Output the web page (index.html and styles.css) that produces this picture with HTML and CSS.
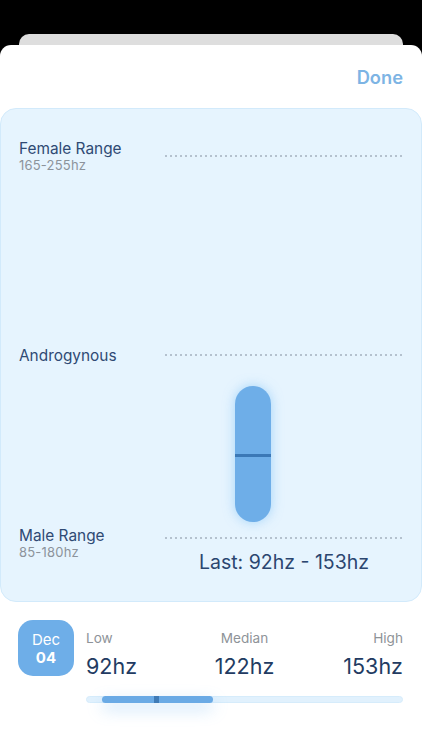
FILE: index.html
```html
<!DOCTYPE html>
<html lang="en">
<head>
    <meta charset="UTF-8">
    <meta name="viewport" content="width=device-width, initial-scale=1.0">
    <link rel="stylesheet" href="styles.css">
    <title>Voice Range</title>
</head>
<body>
    <div class="back-card"></div>
    <div class="sheet">
        <div class="header">
            <button class="done">Done</button>
        </div>

        <div class="chart">
            <div class="row female">
                <div class="label">
                    <div class="title">Female Range</div>
                    <div class="sub">165-255hz</div>
                </div>
                <div class="right"><div class="dots"></div></div>
            </div>

            <div class="row andro">
                <div class="label">
                    <div class="title">Androgynous</div>
                </div>
                <div class="right"><div class="dots"></div></div>
            </div>

            <div class="row male">
                <div class="label">
                    <div class="title">Male Range</div>
                    <div class="sub">85-180hz</div>
                </div>
                <div class="right">
                    <div class="dots"></div>
                    <div class="last">Last: 92hz - 153hz</div>
                </div>
            </div>

            <!-- plot spans 255hz (top line) to 85hz (bottom line) -->
            <div class="plot">
                <div class="pill" style="top: 60.3%; height: 35.6%;">
                    <div class="median" style="top: 50.8%;"></div>
                </div>
            </div>
        </div>

        <div class="summary">
            <div class="date">
                <span class="month">Dec</span>
                <span class="day">04</span>
            </div>
            <div class="stats">
                <div class="stat low">
                    <div class="stat-label">Low</div>
                    <div class="stat-value">92hz</div>
                </div>
                <div class="stat mid">
                    <div class="stat-label">Median</div>
                    <div class="stat-value">122hz</div>
                </div>
                <div class="stat high">
                    <div class="stat-label">High</div>
                    <div class="stat-value">153hz</div>
                </div>
                <div class="track">
                    <div class="fill" style="left: 4.7%; width: 35.4%;">
                        <div class="marker" style="left: 49%;"></div>
                    </div>
                </div>
            </div>
        </div>
    </div>
</body>
</html>
```

FILE: styles.css
```css
* {
    box-sizing: border-box;
}

body {
    margin: 0;
    height: 750px;
    overflow: hidden;
    background-color: #000;
    font-family: Inter, "Noto Sans", sans-serif;
}

.back-card {
    margin: 34px 19px 0;
    height: 11px;
    background-color: #dedede;
    border-radius: 10px 10px 0 0;
}

.sheet {
    height: 705px;
    background-color: #fff;
    border-radius: 11px 11px 0 0;
}

.header {
    height: 63px;
    padding: 21px 19px 0;
    text-align: right;
}

.done {
    border: none;
    background: none;
    padding: 0;
    font-family: inherit;
    font-size: 18.3px;
    line-height: 22px;
    font-weight: 600;
    color: #7db4e4;
    cursor: pointer;
}

.chart {
    position: relative;
    height: 494px;
    padding: 31px 18px 0 0;
    background-color: #e6f4fe;
    border: 1px solid #d2eafb;
    border-radius: 16px;
}

.row {
    display: flex;
    align-items: flex-start;
}

.label {
    width: 164px;
    padding-left: 18px;
    flex-shrink: 0;
}

.title {
    font-size: 15.4px;
    line-height: 18px;
    color: #2f4a74;
}

.sub {
    font-size: 13px;
    line-height: 15px;
    letter-spacing: 0.2px;
    color: #8c939b;
}

.right {
    flex: 1;
}

.dots {
    height: 2px;
    background-image: linear-gradient(to right, #b4c1ce 2px, transparent 2px);
    background-size: 5px 2px;
    background-repeat: repeat-x;
}

.female .dots {
    margin-top: 15px;
}

.andro {
    margin-top: 174px;
}

.andro .dots {
    margin-top: 7px;
}

.male {
    margin-top: 162px;
}

.male .dots {
    margin-top: 10px;
}

.last {
    margin-top: 12px;
    text-align: center;
    font-size: 19.5px;
    line-height: 22px;
    color: #2b4670;
}

.plot {
    position: absolute;
    left: 164px;
    right: 18px;
    top: 47px;
    height: 382px;
}

.pill {
    position: absolute;
    left: 70px;
    width: 36px;
    background-color: #6eaee8;
    border-radius: 18px;
    box-shadow: 0 0 12px rgba(110, 185, 245, 0.55);
}

.median {
    position: absolute;
    left: 0;
    right: 0;
    height: 3px;
    margin-top: -1px;
    background-color: #3b78b6;
}

.summary {
    display: flex;
    align-items: flex-start;
    gap: 12px;
    padding: 18px 19px 0 18px;
}

.date {
    width: 56px;
    height: 56px;
    flex-shrink: 0;
    display: flex;
    flex-direction: column;
    align-items: center;
    justify-content: center;
    padding-top: 2px;
    background-color: #6eaee8;
    border-radius: 15px;
    color: #fff;
    font-size: 15px;
    line-height: 18.2px;
}

.day {
    font-weight: 700;
}

.stats {
    flex: 1;
    display: grid;
    grid-template-columns: 1fr 1fr 1fr;
    padding-top: 10px;
}

.mid {
    text-align: center;
}

.high {
    text-align: right;
}

.stat-label {
    font-size: 13.6px;
    line-height: 17px;
    color: #8e9398;
}

.stat-value {
    margin-top: 6px;
    font-size: 21.5px;
    line-height: 26px;
    color: #223b62;
}

.track {
    grid-column: span 3;
    position: relative;
    height: 7px;
    margin-top: 17px;
    background-color: #e1f1fd;
    border: 1px solid #d6ecfb;
    border-radius: 4px;
}

.fill {
    position: absolute;
    top: -1px;
    bottom: -1px;
    background-color: #6aaae5;
    border-radius: 4px;
    box-shadow: 0 6px 16px rgba(100, 175, 240, 0.4);
}

.marker {
    position: absolute;
    top: 0;
    bottom: 0;
    width: 5px;
    margin-left: -2px;
    background-color: #3f7bb6;
}
```
